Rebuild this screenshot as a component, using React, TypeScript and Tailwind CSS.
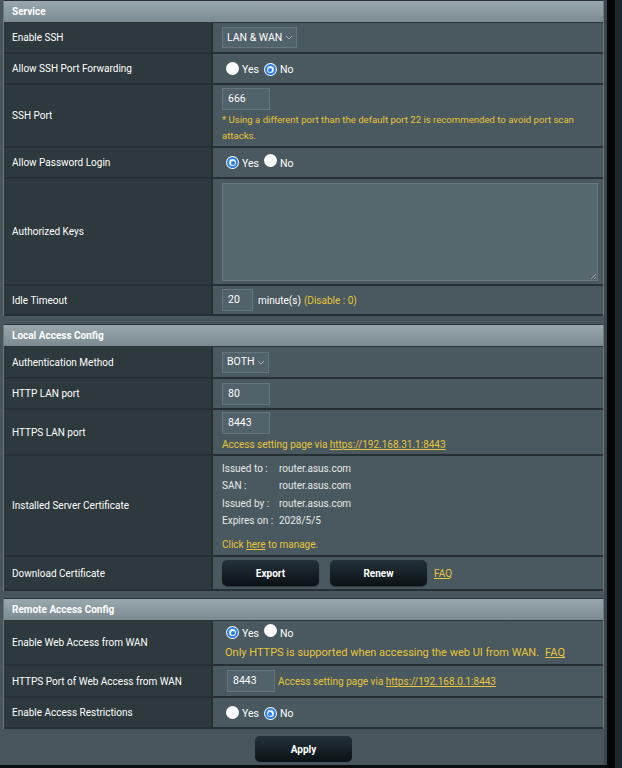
import React from "react";

const YEL = "text-[#e6c53a]";

function Radio({ checked }: { checked: boolean }) {
  if (checked) {
    return (
      <span className="inline-flex w-[13px] h-[13px] rounded-full bg-white items-center justify-center shrink-0">
        <span className="w-[11px] h-[11px] rounded-full border-[2px] border-[#2a7ce6] bg-[#e8f0fb] flex items-center justify-center">
          <span className="w-[4px] h-[4px] rounded-full bg-[#2a7ce6]" />
        </span>
      </span>
    );
  }
  return <span className="inline-block w-[13px] h-[13px] rounded-full bg-white shrink-0" />;
}

function YesNo({ yes }: { yes: boolean }) {
  return (
    <div className="flex items-center text-[10.5px] text-white pl-[4px]">
      <Radio checked={yes} />
      <span className="ml-[3px] mt-[3px]">Yes</span>
      <span className="ml-[5px]">
        <Radio checked={!yes} />
      </span>
      <span className="ml-[3px] mt-[3px]">No</span>
    </div>
  );
}

function Select({ value }: { value: string }) {
  return (
    <div className="self-start h-[21px] border border-[#66757b] bg-[#52626a] flex items-center pl-[4px] pr-[3px] text-[10.5px] text-white whitespace-nowrap">
      <span>{value}</span>
      <svg className="ml-[3px]" width="8" height="5" viewBox="0 0 8 5">
        <path d="M1 1 L4 4 L7 1" fill="none" stroke="#a9b4b8" strokeWidth="1" />
      </svg>
    </div>
  );
}

function Input({ value, w = "w-[48px]" }: { value: string; w?: string }) {
  return (
    <div
      className={`${w} h-[22px] border border-[#66757b] bg-[#52626a] flex items-center pl-[5px] text-[10.5px] text-white shrink-0`}
    >
      {value}
    </div>
  );
}

function Header({ title }: { title: string }) {
  return (
    <div className="h-[22px] flex items-center pl-[8px] bg-gradient-to-b from-[#9aa8ad] to-[#7b8b91] border-b border-[#2a3438] text-[10px] font-bold text-white">
      {title}
    </div>
  );
}

function Row({
  label,
  h,
  children,
}: {
  label: string;
  h: string;
  children?: React.ReactNode;
}) {
  return (
    <div className={`${h} grid grid-cols-[209px_1fr] border-b-[2px] border-[#263034]`}>
      <div className="bg-[#2e393d] flex items-center pl-[8px] text-[10px] text-white border-r-[2px] border-[#263034]">
        {label}
      </div>
      <div className="bg-[#4a595f] flex flex-col justify-center pl-[9px] pr-[4px]">{children}</div>
    </div>
  );
}

function Btn({ label }: { label: string }) {
  return (
    <div className="w-[97px] h-[26px] rounded-[5px] bg-gradient-to-b from-[#24313a] to-[#0b1216] flex items-center justify-center text-[10px] font-bold text-white shadow-[0_1px_1px_rgba(0,0,0,0.4)]">
      {label}
    </div>
  );
}

export default function App() {
  return (
    <div
      className="w-[622px] h-[768px] flex bg-[#0a0d0e] overflow-hidden"
      style={{ fontFamily: "Roboto, 'Noto Sans', Arial, sans-serif" }}
    >
      <div className="w-[604px] h-[765px] bg-[#48555a] pl-[3px] flex flex-col">
        <div className="border-l border-r border-[#6c7a7f] border-t border-t-[#2a3438]">
          <Header title="Service" />
          <Row label="Enable SSH" h="h-[31px]">
            <Select value="LAN & WAN" />
          </Row>
          <Row label="Allow SSH Port Forwarding" h="h-[31px]">
            <YesNo yes={false} />
          </Row>
          <Row label="SSH Port" h="h-[63px]">
            <Input value="666" />
            <div className={`${YEL} text-[9.6px] leading-[16px] mt-[2px] pr-[20px]`}>
              * Using a different port than the default port 22 is recommended to avoid port scan attacks.
            </div>
          </Row>
          <Row label="Allow Password Login" h="h-[31px]">
            <YesNo yes={true} />
          </Row>
          <Row label="Authorized Keys" h="h-[107px]">
            <div className="h-[98px] mr-[1px] border border-[#6a797e] bg-[#56676e] relative">
              <svg className="absolute right-[1px] bottom-[1px]" width="5" height="5" viewBox="0 0 5 5">
                <path d="M5 0 L0 5 M5 3 L3 5" stroke="#9aa6aa" strokeWidth="0.8" />
              </svg>
            </div>
          </Row>
          <Row label="Idle Timeout" h="h-[30px]">
            <div className="flex items-center text-[10px]">
              <Input value="20" w="w-[31px]" />
              <span className="ml-[5px] text-white">minute(s)</span>
              <span className={`ml-[3px] ${YEL}`}>(Disable : 0)</span>
            </div>
          </Row>
        </div>

        <div className="mt-[8px] border-l border-r border-[#6c7a7f] border-t border-t-[#2a3438]">
          <Header title="Local Access Config" />
          <Row label="Authentication Method" h="h-[32px]">
            <Select value="BOTH" />
          </Row>
          <Row label="HTTP LAN port" h="h-[31px]">
            <Input value="80" />
          </Row>
          <Row label="HTTPS LAN port" h="h-[46px]">
            <Input value="8443" />
            <div className={`${YEL} text-[10px] mt-[3px]`}>
              Access setting page via <span className="underline">https://192.168.31.1:8443</span>
            </div>
          </Row>
          <Row label="Installed Server Certificate" h="h-[101px]">
            <div className="text-[10px] text-[#e6e9ea] leading-[17.5px]">
              {[
                ["Issued to :", "router.asus.com"],
                ["SAN :", "router.asus.com"],
                ["Issued by :", "router.asus.com"],
                ["Expires on :", "2028/5/5"],
              ].map(([k, v]) => (
                <div key={k} className="flex">
                  <span className="w-[57px]">{k}</span>
                  <span>{v}</span>
                </div>
              ))}
            </div>
            <div className={`${YEL} text-[10px] mt-[7px]`}>
              Click <span className="underline">here</span> to manage.
            </div>
          </Row>
          <Row label="Download Certificate" h="h-[34px]">
            <div className="flex items-center">
              <Btn label="Export" />
              <div className="ml-[11px]">
                <Btn label="Renew" />
              </div>
              <span className={`ml-[7px] ${YEL} text-[10px] underline`}>FAQ</span>
            </div>
          </Row>
        </div>

        <div className="mt-[7px] border-l border-r border-[#6c7a7f] border-t border-t-[#2a3438]">
          <Header title="Remote Access Config" />
          <Row label="Enable Web Access from WAN" h="h-[45px]">
            <YesNo yes={true} />
            <div className={`${YEL} text-[11px] mt-[3px] pl-[3px]`}>
              Only HTTPS is supported when accessing the web UI from WAN.
              <span className="ml-[6px] underline">FAQ</span>
            </div>
          </Row>
          <Row label="HTTPS Port of Web Access from WAN" h="h-[32px]">
            <div className="flex items-center pl-[5px]">
              <Input value="8443" />
              <span className={`ml-[3px] ${YEL} text-[10px]`}>
                Access setting page via <span className="underline">https://192.168.0.1:8443</span>
              </span>
            </div>
          </Row>
          <Row label="Enable Access Restrictions" h="h-[31px]">
            <YesNo yes={false} />
          </Row>
        </div>

        <div className="flex justify-center mt-[7px]">
          <div className="w-[97px] h-[26px] rounded-[5px] bg-gradient-to-b from-[#24313a] to-[#0b1216] flex items-center justify-center text-[10px] font-bold text-white">
            Apply
          </div>
        </div>
      </div>
      <div className="w-[3px] h-[765px] bg-[#3c474b]" />
      <div className="w-[8px] bg-[#050607]" />
      <div className="flex-1 bg-[#1b272c]" />
    </div>
  );
}
